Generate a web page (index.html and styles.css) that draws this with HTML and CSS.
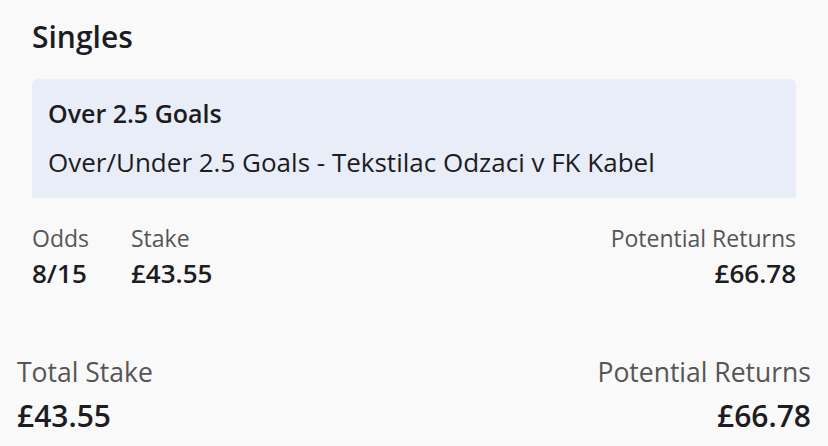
FILE: index.html
```html
<!DOCTYPE html>
<html lang="en">

<head>
  <meta charset="UTF-8">
  <title>Bet receipt</title>
  <link rel="stylesheet" href="styles.css">
</head>

<body>
  <main class="receipt">
    <section class="singles">
      <h2 class="singles__heading">Singles</h2>
      <div class="selection">
        <p class="selection__name">Over 2.5 Goals</p>
        <p class="selection__market">Over/Under 2.5 Goals - Tekstilac Odzaci v FK Kabel</p>
      </div>
      <div class="bet">
        <div class="bet__cell">
          <p class="bet__label">Odds</p>
          <p class="bet__value">8/15</p>
        </div>
        <div class="bet__cell">
          <p class="bet__label">Stake</p>
          <p class="bet__value">£43.55</p>
        </div>
        <div class="bet__cell bet__cell_align_right">
          <p class="bet__label">Potential Returns</p>
          <p class="bet__value">£66.78</p>
        </div>
      </div>
    </section>

    <section class="totals">
      <div class="totals__cell">
        <p class="totals__label">Total Stake</p>
        <p class="totals__value">£43.55</p>
      </div>
      <div class="totals__cell totals__cell_align_right">
        <p class="totals__label">Potential Returns</p>
        <p class="totals__value">£66.78</p>
      </div>
    </section>
  </main>
</body>

</html>
```

FILE: styles.css
```css
html,
body {
  margin: 0;
  font-family: "Open Sans", "Noto Sans", Arial, sans-serif;
  -webkit-font-smoothing: antialiased;
  background-color: #f9f9fa;
  color: #1c1c22;
}

p,
h2 {
  margin: 0;
}

.receipt {
  width: 828px;
  height: 446px;
}

.singles {
  padding: 19px 32px 0 32px;
}

.singles__heading {
  font-size: 30px;
  line-height: 36px;
  font-weight: 600;
}

.selection {
  margin-top: 24px;
  padding: 18px 16px 19px 16px;
  background-color: #e9edf8;
  border-radius: 6px 6px 0 0;
}

.selection__name {
  font-size: 25px;
  line-height: 32px;
  font-weight: 600;
}

.selection__market {
  margin-top: 16px;
  font-size: 26px;
  line-height: 34px;
}

.bet {
  display: flex;
  gap: 42px;
  padding-top: 25px;
}

.bet__cell_align_right {
  margin-left: auto;
  text-align: right;
}

.bet__label {
  font-size: 23px;
  line-height: 30px;
  color: #555;
}

.bet__value {
  margin-top: 3px;
  font-size: 26px;
  line-height: 34px;
  font-weight: 600;
}

.totals {
  display: flex;
  justify-content: space-between;
  padding: 64px 17px 0 17px;
}

.totals__cell_align_right {
  text-align: right;
}

.totals__label {
  font-size: 26.5px;
  line-height: 36px;
  color: #555;
}

.totals__value {
  margin-top: 6px;
  font-size: 30px;
  line-height: 40px;
  font-weight: 600;
}
```
